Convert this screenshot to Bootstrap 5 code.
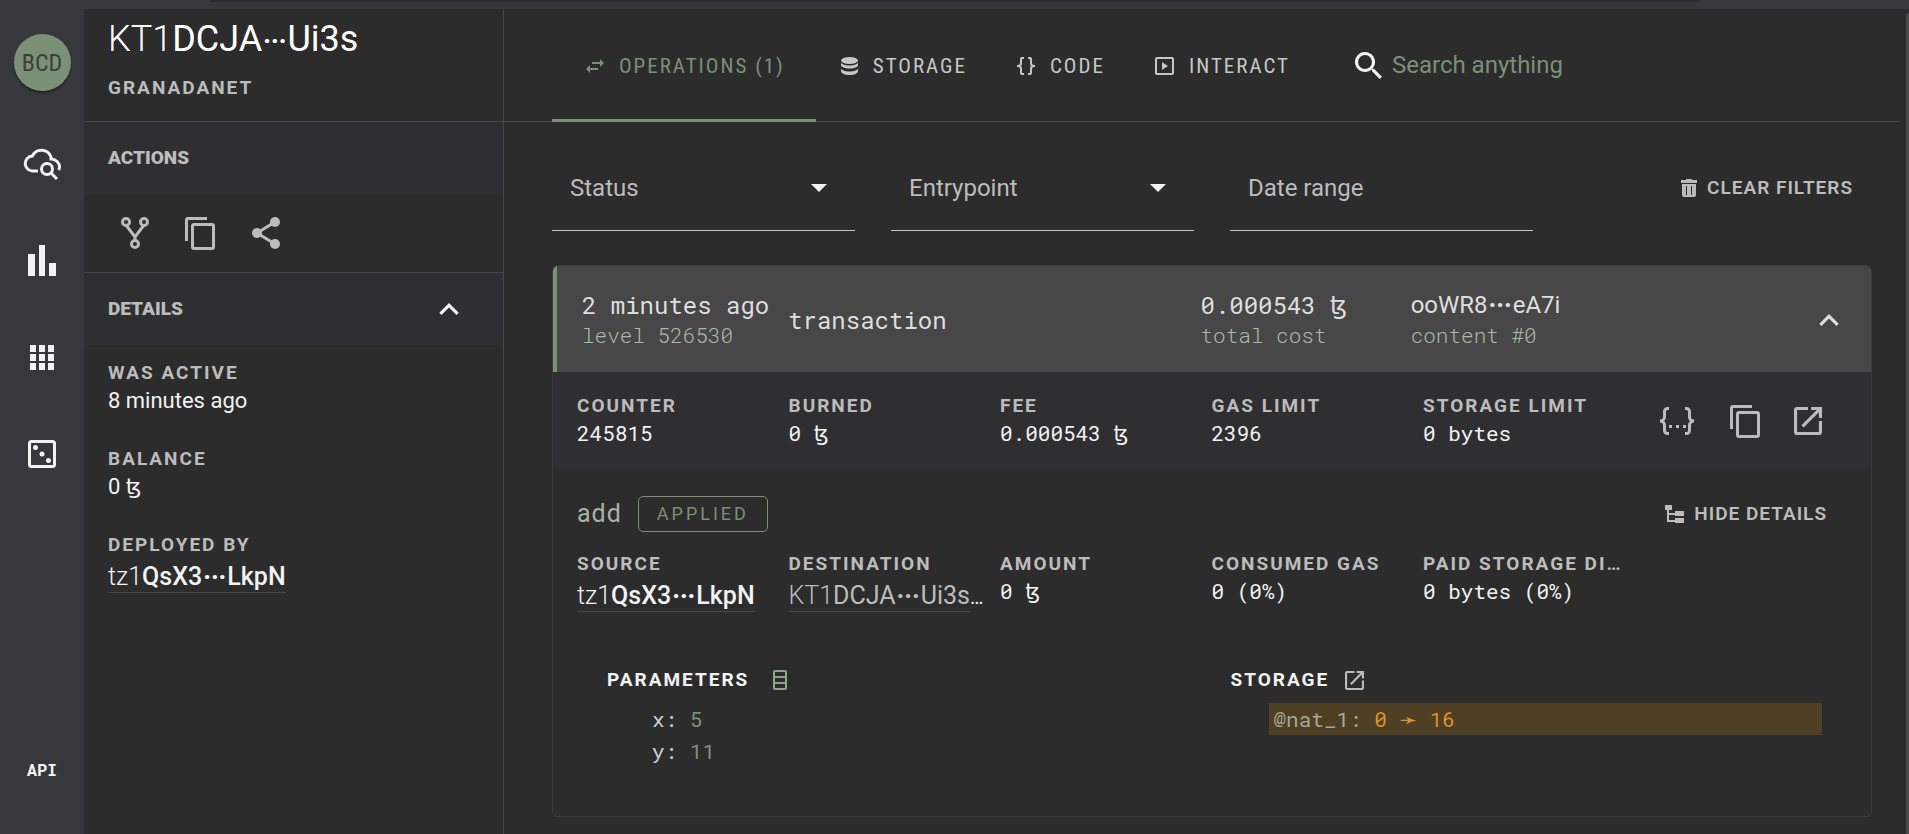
<!DOCTYPE html>
<html lang="en" data-bs-theme="dark">
<head>
<meta charset="utf-8">
<meta name="viewport" content="width=device-width, initial-scale=1">
<title>KT1DCJA···Ui3s</title>
<link href="https://cdn.jsdelivr.net/npm/bootstrap@5.3.0/dist/css/bootstrap.min.css" rel="stylesheet">
<style>
:root{--sans:Roboto,"DejaVu Sans",sans-serif;--cond:"Roboto Condensed",Roboto,"DejaVu Sans",sans-serif;--mono:"Roboto Mono","Liberation Mono","DejaVu Sans",monospace;
--bg:#2c2c2c;--rail:#37383c;--band:#2f2f31;--line:#484848;--green:#7b9076;--soft:#bcbcbc;--lit:#f2f2f2}
body{background:var(--bg);color:var(--lit);font-family:var(--sans);font-size:20px;line-height:24px}
a{color:inherit;text-decoration:none}
svg{display:block;fill:currentColor}
button{background:none;border:0;padding:0;color:inherit;text-align:left}
.window-strip{height:9px;background:var(--rail)}
.window-strip div{width:78%;height:2px;margin-left:11%;background:var(--bg)}
.rail{width:84px;background:var(--rail);padding:25px 0 53px}
.logo-disc{width:57px;height:57px;border-radius:50%;background:var(--green);color:#3c4039;font:24px var(--cond);box-shadow:0 2px 2px #0006;margin-bottom:52px}
.rail-icon{height:40px;margin-bottom:57px}
.api-link{font:bold 17px var(--mono)}
.side{width:420px;border-right:1px solid var(--line)}
.side-head{height:112px;padding:8px 24px 0}
.side-title{font-size:36px;line-height:44px;font-weight:400;margin-bottom:13px}
.thin{font-weight:300}
.dots{font-size:24px;font-weight:900;vertical-align:2px;padding:0 1px}
.addr .dots,.flat .dots{vertical-align:0}
.lbl{font-size:19px;line-height:24px;font-weight:700;letter-spacing:2px;color:var(--soft);white-space:nowrap;overflow:hidden;text-overflow:ellipsis}
.band{height:73px;padding:0 44px 0 24px;background:var(--band);border-top:1px solid var(--line);font-size:19px;font-weight:900;color:var(--soft)}
.side-actions{height:78px;padding-left:32px;gap:29px;color:var(--soft)}
.facts{padding:16px 24px}
.facts>div{height:86px}
.val{font-size:22px;line-height:32px}
.addr{font-size:25px;line-height:30px;font-weight:500;border-bottom:1px solid var(--line);display:inline-block}
.addr-line{line-height:32px;margin-top:5px}
.topbar{height:113px;border-bottom:1px solid var(--line);padding-left:48px;margin-right:6px}
.tabs .nav-link{height:113px;padding:0 31px 0 34px;font:21px var(--cond);letter-spacing:2px;color:#c5c8c3;border:solid transparent;border-width:3px 0;border-radius:0;gap:15px}
.tabs .nav-link.active{color:var(--green);border-bottom-color:var(--green)}
.tabs .nav-link+.nav-link{padding:0 25px}
.search{height:74px;margin-left:40px;gap:10px}
.search input{background:none;border:0;outline:0;color:var(--lit);font-size:24px;padding:0}
.search input::placeholder{color:var(--green);opacity:1}
.content{padding:23px 34px 17px 48px}
.filters{--bs-gutter-x:36px}
.filter{height:86px;border:0;border-bottom:1px solid #c4c4c4;border-radius:0;background-color:transparent;color:var(--soft);font-size:24px;padding:0 18px}
.filter:focus{box-shadow:none;background-color:transparent}
.filter::placeholder{color:var(--soft);opacity:1}
select.filter{background-image:url("data:image/svg+xml,%3Csvg xmlns='http://www.w3.org/2000/svg' viewBox='0 0 16 8'%3E%3Cpath fill='%23f2f2f2' d='M0 0h16L8 8z'/%3E%3C/svg%3E");background-size:16px 8px;background-position:right 28px center}
.act{font-size:19px;font-weight:600;letter-spacing:1px;color:var(--soft);gap:10px}
.act-end{margin-right:19px}
.op{border:1px solid #3a3b3f;border-radius:6px;margin-top:34px;overflow:hidden}
.op-head{height:106px;background:#474747;border-left:4px solid var(--green);padding:2px 32px 0 25px;font-family:var(--mono);font-size:24px;line-height:29px;color:#dedede}
.cells{--bs-gutter-x:0}
.sub{font-size:21px;line-height:30px;color:#abbaa7;font-weight:300}
.op-info{height:98px;background:var(--band);padding:22px 25px 0 24px}
.op-info .icons{gap:34px;height:54px}
.num{font-family:var(--mono);font-size:21px;line-height:28px;margin-top:1px;white-space:nowrap}
.op-body{padding:26px 25px 0 24px;height:346px}
.entry{font-size:25px;letter-spacing:1px;color:#a8b2a5}
.status{border:1px solid var(--green);border-radius:5px;color:var(--green);height:36px;padding:0 18px;font-size:18px;letter-spacing:3px}
.tree{margin-top:55px;padding:0 0 0 30px;--bs-gutter-x:0}
.tree .lbl{color:var(--lit);margin-bottom:11px}
.tree pre{font:21px/32px var(--mono);color:#d0d0d0;margin:0;padding-left:45px;overflow:hidden}
.g{color:var(--green)}
.tree pre.changed{background:#4e3f25;margin:0 24px 0 38px;padding-left:5px;color:#a5a996}
.o{color:#d9942b}
.scroll-edge{width:3px;background:#4a4a4a;margin-top:4px;border-radius:3px 0 0 0}
</style>
</head>
<body class="d-flex flex-column min-vh-100">
<svg class="d-none">
<symbol id="copy" viewBox="0 0 30 33"><path d="M22 0H3a3 3 0 0 0-3 3v21h3V3h19z"/><path fill-rule="evenodd" d="M9 6h18a3 3 0 0 1 3 3v21a3 3 0 0 1-3 3H9a3 3 0 0 1-3-3V9a3 3 0 0 1 3-3zm0 3v21h18V9z"/></symbol>
<symbol id="open" viewBox="3 3 18 18"><path d="M14 3v2h3.600l-9.800 9.800 1.400 1.400L19 6.400V10h2V3m-2 16H5V5h7V3H5a2 2 0 0 0-2 2v14a2 2 0 0 0 2 2h14a2 2 0 0 0 2-2v-7h-2z"/></symbol>
<symbol id="up" viewBox="6 8 12 7.400"><path d="M7.400 15.400 12 10.800l4.600 4.600L18 14l-6-6-6 6z"/></symbol>
</svg>
<div class="window-strip"><div></div></div>
<div class="d-flex flex-grow-1">
<nav class="rail d-flex flex-column align-items-center flex-shrink-0" aria-label="Main">
<a href="#" class="logo-disc d-flex align-items-center justify-content-center flex-shrink-0">BCD</a>
<a href="#" class="rail-icon d-flex align-items-center" aria-label="Search"><svg width="38" height="34" viewBox="0 0 38 34"><g fill="none" stroke="currentColor" stroke-width="3"><path d="M15 25H10a7.500 7.500 0 0 1-.6-15A10 10 0 0 1 28 11v2c5 0 8.500 4 8.500 8 0 1-.3 2-.8 3"/><circle cx="24" cy="23" r="5.500"/><path d="m28 27 6 6"/></g></svg></a>
<a href="#" class="rail-icon d-flex align-items-center" aria-label="Stats"><svg width="28" height="31" viewBox="0 0 28 31"><path d="M0 9h7v22H0zM11 0h6v31h-6zM21 18h7v13h-7z"/></svg></a>
<a href="#" class="rail-icon d-flex align-items-center" aria-label="Apps"><svg width="24" height="25" viewBox="0 0 24 25"><path d="M0 0h6v7H0zM9 0h6v7H9zM18 0h6v7h-6zM0 9h6v7H0zM9 9h6v7H9zM18 9h6v7h-6zM0 18h6v7H0zM9 18h6v7H9zM18 18h6v7h-6z"/></svg></a>
<a href="#" class="rail-icon d-flex align-items-center" aria-label="Random"><svg width="28" height="28" viewBox="0 0 28 28"><rect x="1.500" y="1.500" width="25" height="25" rx="2" fill="none" stroke="currentColor" stroke-width="3"/><circle cx="7.500" cy="7.500" r="2.500"/><circle cx="14" cy="14" r="2.500"/><circle cx="20.500" cy="20.500" r="2.500"/></svg></a>
<a href="#" class="api-link mt-auto">API</a>
</nav>
<aside class="side flex-shrink-0">
<div class="side-head"><h1 class="side-title"><span class="thin">KT1</span>DCJA<span class="dots">···</span>Ui3s</h1><div class="lbl">GRANADANET</div></div>
<div class="band d-flex align-items-center">ACTIONS</div>
<div class="side-actions d-flex align-items-center">
<button type="button" aria-label="Fork"><svg width="40" height="32" viewBox="0 0 40 32"><g fill="none" stroke="currentColor" stroke-width="3"><circle cx="10" cy="5" r="3.500"/><circle cx="28" cy="5" r="3.500"/><circle cx="19" cy="27" r="3.500"/><path d="m10 8 9 12 9-12M19 20v4"/></g></svg></button>
<button type="button" aria-label="Copy"><svg width="30" height="33"><use href="#copy"/></svg></button>
<button type="button" aria-label="Share"><svg width="44" height="32" viewBox="0 0 44 32"><circle cx="13" cy="16" r="5"/><circle cx="31" cy="5" r="5"/><circle cx="31" cy="27" r="5"/><path d="M31 5 13 16l18 11" fill="none" stroke="currentColor" stroke-width="3"/></svg></button>
</div>
<button type="button" class="band d-flex align-items-center justify-content-between w-100 border-bottom-0 border-start-0 border-end-0">DETAILS<svg width="20" height="12" style="color:#f2f2f2"><use href="#up"/></svg></button>
<div class="facts">
<div><div class="lbl">WAS ACTIVE</div><div class="val">8 minutes ago</div></div>
<div><div class="lbl">BALANCE</div><div class="val">0 ꜩ</div></div>
<div><div class="lbl">DEPLOYED BY</div><div class="addr-line"><a href="#" class="addr"><span class="thin">tz1</span>QsX3<span class="dots">···</span>LkpN</a></div></div>
</div>
</aside>
<main class="flex-grow-1" style="min-width:0">
<div class="topbar d-flex">
<nav class="tabs nav flex-nowrap">
<a class="nav-link active d-flex align-items-center" href="#"><svg width="18" height="14" viewBox="0 0 18 14"><path d="M18 4 14 0v3H6v2h8v3zM0 10l4 4v-3h8V9H4V6z"/></svg>OPERATIONS (1)</a>
<a class="nav-link d-flex align-items-center" href="#"><svg width="17" height="18" viewBox="0 0 17 18"><ellipse cx="8.500" cy="3.500" rx="8.500" ry="3.500"/><path d="M0 5v3c0 2 4 3.500 8.500 3.500S17 10 17 8V5c0 2-4 3.500-8.500 3.500S0 7 0 5zM0 11v3c0 2.500 4 4 8.500 4s8.500-1.500 8.500-4v-3c0 2-4 3.500-8.500 3.500S0 13 0 11z"/></svg>STORAGE</a>
<a class="nav-link d-flex align-items-center" href="#"><svg width="18" height="18" viewBox="3 3 18 18"><path d="M8 3a2 2 0 0 0-2 2v4a2 2 0 0 1-2 2H3v2h1a2 2 0 0 1 2 2v4a2 2 0 0 0 2 2h2v-2H8v-5a2 2 0 0 0-2-2 2 2 0 0 0 2-2V5h2V3m6 0a2 2 0 0 1 2 2v4a2 2 0 0 0 2 2h1v2h-1a2 2 0 0 0-2 2v4a2 2 0 0 1-2 2h-2v-2h2v-5a2 2 0 0 1 2-2 2 2 0 0 1-2-2V5h-2V3z"/></svg>CODE</a>
<a class="nav-link d-flex align-items-center" href="#"><svg width="19" height="18" viewBox="0 0 19 18"><rect x="1" y="1" width="17" height="16" rx="1" fill="none" stroke="currentColor" stroke-width="2"/><path d="M7 5v8l6-4z"/></svg>INTERACT</a>
</nav>
<label class="search d-flex align-items-center my-auto"><svg width="27" height="27" viewBox="3 3 17.500 17.500"><path d="M15.500 14h-.8l-.3-.3A6.500 6.500 0 1 0 13.700 14.400l.3.300v.8l5 5 1.500-1.500zm-6 0a4.500 4.500 0 1 1 0-9 4.500 4.500 0 0 1 0 9z"/></svg><input type="text" placeholder="Search anything" aria-label="Search anything"></label>
</div>
<div class="content">
<div class="filters row">
<div class="col-3"><select class="form-select filter" aria-label="Status"><option>Status</option></select></div>
<div class="col-3"><select class="form-select filter" aria-label="Entrypoint"><option>Entrypoint</option></select></div>
<div class="col-3"><input class="form-control filter" placeholder="Date range" aria-label="Date range"></div>
<div class="col-3 d-flex justify-content-end align-items-center"><button type="button" class="act act-end d-flex align-items-center"><svg width="16" height="18" viewBox="0 0 16 18"><path fill-rule="evenodd" d="M5 0h6v1h5v3H0V1h5zM1 5h14v11a2 2 0 0 1-2 2H3a2 2 0 0 1-2-2zm4 2v9h1V7zm5 0v9h1V7z"/></svg>CLEAR FILTERS</button></div>
</div>
<section class="op">
<div class="op-head d-flex align-items-center">
<div class="row cells flex-grow-1 align-items-center">
<div class="col-2 text-nowrap">2 minutes ago<div class="sub">level 526530</div></div>
<div class="col-4">transaction</div>
<div class="col-2">0.000543 ꜩ<div class="sub">total cost</div></div>
<div class="col-4 ps-1"><span class="flat" style="font-family:var(--sans)">ooWR8<span class="dots">···</span>eA7i</span><div class="sub">content #0</div></div>
</div>
<button type="button" aria-label="Collapse"><svg width="20" height="12"><use href="#up"/></svg></button>
</div>
<div class="op-info"><div class="row cells">
<div class="col-2"><div class="lbl">COUNTER</div><div class="num">245815</div></div>
<div class="col-2"><div class="lbl">BURNED</div><div class="num">0 ꜩ</div></div>
<div class="col-2"><div class="lbl">FEE</div><div class="num">0.000543 ꜩ</div></div>
<div class="col-2"><div class="lbl">GAS LIMIT</div><div class="num">2396</div></div>
<div class="col-2"><div class="lbl">STORAGE LIMIT</div><div class="num">0 bytes</div></div>
<div class="col-2 d-flex justify-content-end align-items-center act icons pe-4">
<button type="button" aria-label="Raw JSON"><svg width="38" height="28" viewBox="0 0 38 28"><g fill="none" stroke="currentColor" stroke-width="3"><path d="M11 1.500H9.500a3 3 0 0 0-3 3V10c0 2-1.500 4-4.500 4 3 0 4.500 2 4.500 4v5.500a3 3 0 0 0 3 3H11M27 1.500h1.500a3 3 0 0 1 3 3V10c0 2 1.500 4 4.500 4-3 0-4.500 2-4.500 4v5.500a3 3 0 0 1-3 3H27"/></g><path d="M11 18h3v3h-3zM18 18h3v3h-3zM25 18h3v3h-3z"/></svg></button>
<button type="button" aria-label="Copy"><svg width="30" height="33"><use href="#copy"/></svg></button>
<button type="button" aria-label="Open"><svg width="28" height="28"><use href="#open"/></svg></button>
</div>
</div></div>
<div class="op-body">
<div class="d-flex align-items-center"><span class="entry me-3">add</span><span class="status d-flex align-items-center">APPLIED</span><button type="button" class="act act-end d-flex align-items-center ms-auto"><svg width="19" height="18" viewBox="0 0 19 18"><path d="M0 0h7v5H4v3h6V6h9v5h-9v-1H4v5h6v-2h9v5h-9v-1H2V5H0z"/></svg>HIDE DETAILS</button></div>
<div class="row cells pt-3 mt-1">
<div class="col-2"><div class="lbl">SOURCE</div><div class="addr-line"><a href="#" class="addr"><span class="thin">tz1</span>QsX3<span class="dots">···</span>LkpN</a></div></div>
<div class="col-2"><div class="lbl">DESTINATION</div><div class="addr-line text-nowrap"><a href="#" class="addr fw-normal" style="color:var(--soft)"><span class="thin">KT1</span>DCJA<span class="dots">···</span>Ui3s</a>…</div></div>
<div class="col-2"><div class="lbl">AMOUNT</div><div class="num">0 ꜩ</div></div>
<div class="col-2"><div class="lbl">CONSUMED GAS</div><div class="num">0 (0%)</div></div>
<div class="col-2"><div class="lbl pe-2">PAID STORAGE DIFF</div><div class="num">0 bytes (0%)</div></div>
</div>
<div class="tree row">
<div class="col-6"><div class="lbl d-flex align-items-center">PARAMETERS<svg class="ms-4" width="14" height="20" viewBox="0 0 14 20" style="color:#91a38d"><path fill-rule="evenodd" d="M2 0h10a2 2 0 0 1 2 2v16a2 2 0 0 1-2 2H2a2 2 0 0 1-2-2V2a2 2 0 0 1 2-2zm0 2v4h10V2zm0 6v4h10V8zm0 6v4h10v-4z"/></svg></div>
<pre>x: <span class="g">5</span>
y: <span class="g">11</span></pre></div>
<div class="col-6 ps-1"><div class="lbl d-flex align-items-center">STORAGE<svg class="ms-3" width="19" height="19" style="color:#bcbcbc"><use href="#open"/></svg></div>
<pre class="changed">@nat_1: <span class="o">0 ➛ 16</span></pre></div>
</div>
</div>
</section>
</div>
</main>
<div class="scroll-edge flex-shrink-0"></div>
</div>
<script src="https://cdn.jsdelivr.net/npm/bootstrap@5.3.0/dist/js/bootstrap.bundle.min.js"></script>
</body>
</html>
